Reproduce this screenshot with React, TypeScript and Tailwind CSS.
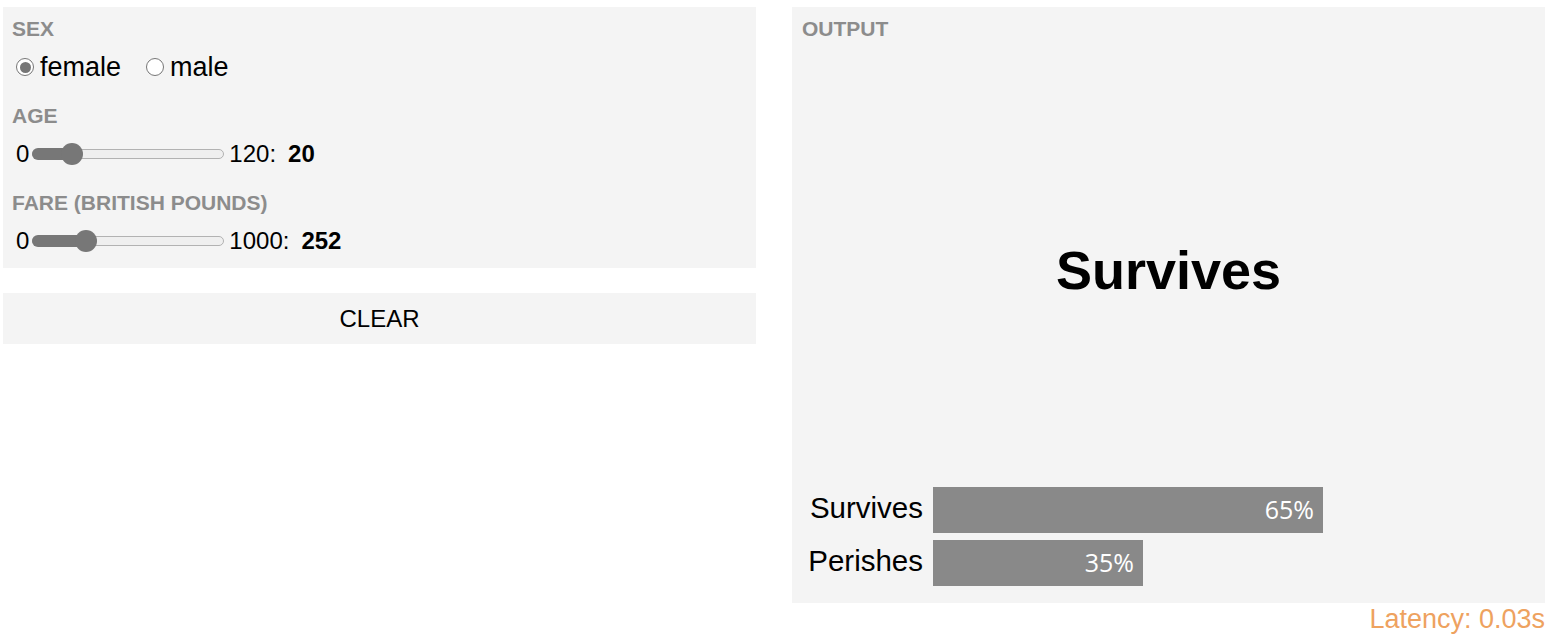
import React from "react";

const font = { fontFamily: '"Liberation Sans", Arial, sans-serif' };

function Label({ children }: { children: React.ReactNode }) {
  return (
    <div className="h-[23px] text-[21px] leading-[23px] font-bold uppercase text-[#8c8c8c]">{children}</div>
  );
}

function Radio({ checked, label }: { checked?: boolean; label: string }) {
  return (
    <label className="flex items-center">
      <span className="w-[18px] h-[18px] rounded-full border border-[#767676] bg-white flex items-center justify-center shrink-0">
        {checked && <span className="w-[11px] h-[11px] rounded-full bg-[#767676]" />}
      </span>
      <span className="ml-[6px] text-[27px] leading-[30px] text-black">{label}</span>
    </label>
  );
}

function Slider({ max, value }: { max: number; value: number }) {
  const width = 192;
  const thumb = 22;
  const center = thumb / 2 + ((width - thumb) * value) / max;
  return (
    <div className="flex items-center h-[32px] pl-[4px] text-[24px] text-black">
      <span>0</span>
      <div className="relative w-[192px] h-[24px] ml-[3px] flex items-center">
        <div className="absolute left-0 right-0 h-[10px] rounded-full border border-[#b2b2b2] bg-[#efefef]" />
        <div className="absolute left-0 h-[12px] rounded-full bg-[#777777]" style={{ width: center }} />
        <div
          className="absolute w-[22px] h-[22px] rounded-full bg-[#777777]"
          style={{ left: center - thumb / 2 }}
        />
      </div>
      <span className="ml-[5px]">{max}:</span>
      <span className="ml-[12px] font-bold">{value}</span>
    </div>
  );
}

function Bar({ label, pct }: { label: string; pct: number }) {
  return (
    <div className="flex items-center h-[46px]">
      <div className="w-[141px] pr-[10px] pb-[5px] text-right text-[29.5px] leading-[32px] text-black">{label}</div>
      <div className="w-[600px] h-[46px]">
        <div
          className="h-full bg-[#898989] flex items-center justify-end pr-[9px] text-white text-[25px]"
          style={{ width: (600 * pct) / 100, fontFamily: '"Open Sans", "DejaVu Sans", sans-serif' }}
        >
          {pct}%
        </div>
      </div>
    </div>
  );
}

export default function App() {
  return (
    <div className="w-[1551px] h-[642px] bg-white pt-[7px] pl-[3px] pr-[6px]" style={font}>
      <div className="flex gap-[36px]">
        <div className="w-[753px] flex flex-col">
          <div className="bg-[#f4f4f4] px-[9px] pt-[10px] pb-[11px] flex flex-col gap-[21px]">
            <div>
              <Label>Sex</Label>
              <div className="mt-[11px] h-[32px] pl-[4px] flex items-center gap-[25px]">
                <Radio checked label="female" />
                <Radio label="male" />
              </div>
            </div>
            <div>
              <Label>Age</Label>
              <div className="mt-[11px]">
                <Slider max={120} value={20} />
              </div>
            </div>
            <div>
              <Label>Fare (British Pounds)</Label>
              <div className="mt-[11px]">
                <Slider max={1000} value={252} />
              </div>
            </div>
          </div>
          <button className="mt-[25px] h-[51px] bg-[#f4f4f4] text-[24px] text-black uppercase">Clear</button>
        </div>
        <div className="w-[753px] flex flex-col">
          <div className="h-[596px] bg-[#f4f4f4] flex flex-col pt-[10px] pl-[10px]">
            <Label>Output</Label>
            <div className="h-[447px] pt-[13px] flex items-center justify-center pr-[10px]">
              <div className="text-[54px] font-bold text-black leading-none">Survives</div>
            </div>
            <div className="-ml-[10px] flex flex-col gap-[7px]">
              <Bar label="Survives" pct={65} />
              <Bar label="Perishes" pct={35} />
            </div>
          </div>
          <div className="h-[30px] mt-[1px] text-right text-[27px] leading-[30px] text-[#eea25f]">Latency: 0.03s</div>
        </div>
      </div>
    </div>
  );
}
